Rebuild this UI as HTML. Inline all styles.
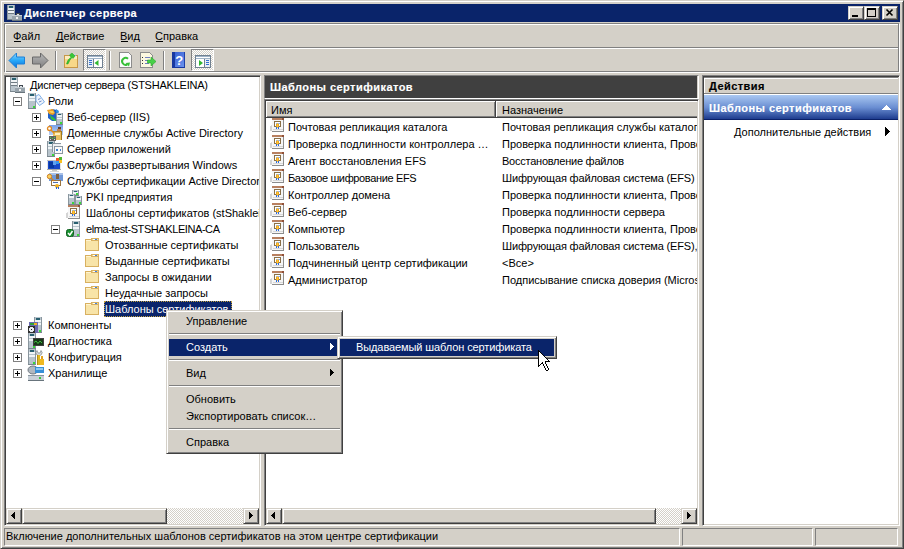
<!DOCTYPE html>
<html><head><meta charset="utf-8"><style>
*{box-sizing:border-box;margin:0;padding:0}
html,body{width:904px;height:549px;overflow:hidden;background:#d4d0c8;font-family:"Liberation Sans",sans-serif;font-size:11px;color:#000}
.a{position:absolute}
.t{position:absolute;white-space:pre;line-height:13px;height:13px}
.frame{left:0;top:0;width:904px;height:550px;border:1px solid;border-color:#d4d0c8 #404040 #404040 #d4d0c8;box-shadow:inset 1px 1px #fff,inset -1px -1px #808080}
.sunk{border:1px solid;border-color:#808080 #fff #fff #808080;box-shadow:inset 1px 1px #404040,inset -1px -1px #d4d0c8}
.btn{background:#d4d0c8;border:1px solid;border-color:#d4d0c8 #404040 #404040 #d4d0c8;box-shadow:inset 1px 1px #fff,inset -1px -1px #808080}
.dither{background:repeating-conic-gradient(#d4d0c8 0 25%,#fff 0 50%) 0 0/2px 2px}
.w{background:#fff}
.b{font-weight:bold;letter-spacing:0.45px;-webkit-text-stroke:0.15px currentColor}
.exp{position:absolute;width:9px;height:9px;border:1px solid #808080;background:#fff}
.exp:before{content:"";position:absolute;left:1px;top:3px;width:5px;height:1px;background:#000}
.exp.p:after{content:"";position:absolute;left:3px;top:1px;width:1px;height:5px;background:#000}
.thin{border:1px solid;border-color:#808080 #fff #fff #808080}
svg{position:absolute;overflow:visible}
</style></head><body>
<div class="a frame" style="left:0px;top:0px;width:904px;height:549px;"></div>
<div class="a " style="left:4px;top:4px;width:896px;height:18px;background:#0a246a"></div>
<svg style="left:7px;top:5px" width="16" height="16" viewBox="0 0 16 16"><g shape-rendering="crispEdges"><rect x="0" y="0" width="8" height="15" fill="#b8c4cc"/><rect x="0" y="0" width="1" height="15" fill="#8a969e"/><rect x="7" y="0" width="1" height="15" fill="#9aa6ae"/><rect x="0" y="14" width="8" height="1" fill="#7a868e"/><rect x="2" y="1" width="4" height="2" fill="#286070"/><rect x="1" y="3" width="6" height="2" fill="#f0f4f6"/><rect x="1" y="6" width="6" height="2" fill="#f0f4f6"/><rect x="1" y="5" width="6" height="1" fill="#707c84"/><rect x="1" y="8" width="6" height="1" fill="#707c84"/><rect x="5" y="10" width="10" height="6" fill="#98a4ac"/><rect x="5" y="10" width="10" height="1" fill="#c8d0d6"/><rect x="5" y="15" width="10" height="1" fill="#68747c"/><rect x="9" y="8" width="4" height="2" fill="#404850"/><rect x="10" y="9" width="2" height="1" fill="#e0e4e8"/><rect x="9" y="12" width="2" height="2" fill="#f0f0f0"/></g></svg>
<div class="t b" style="left:24px;top:7px;color:#fff">Диспетчер сервера</div>
<div class="a btn" style="left:848px;top:6px;width:16px;height:14px;"></div>
<div class="a btn" style="left:864px;top:6px;width:16px;height:14px;"></div>
<div class="a btn" style="left:882px;top:6px;width:16px;height:14px;"></div>
<svg style="left:848px;top:6px" width="16" height="14" viewBox="0 0 16 14"><g shape-rendering="crispEdges"><rect x="4" y="9" width="6" height="2" fill="#000"/></g></svg>
<svg style="left:864px;top:6px" width="16" height="14" viewBox="0 0 16 14"><g shape-rendering="crispEdges"><rect x="3.5" y="2.5" width="8" height="8" fill="none" stroke="#000" stroke-width="1"/><rect x="3" y="2" width="9" height="2" fill="#000"/></g></svg>
<svg style="left:882px;top:6px" width="16" height="14" viewBox="0 0 16 14"><g><path d="M4.5 3.5 L10.5 9.5 M10.5 3.5 L4.5 9.5" stroke="#000" stroke-width="1.6"/></g></svg>
<div class="a " style="left:4px;top:23px;width:895px;height:49px;border:1px solid #808080"></div>
<div class="a " style="left:5px;top:24px;width:895px;height:49px;border:1px solid #fff"></div>
<div class="a " style="left:6px;top:47px;width:892px;height:1px;background:#808080"></div>
<div class="a " style="left:5px;top:48px;width:893px;height:1px;background:#fff"></div>
<div class="a " style="left:898px;top:24px;width:1px;height:48px;background:#808080"></div>
<div class="t " style="left:13px;top:30px;">Файл</div>
<div class="t " style="left:56px;top:30px;">Действие</div>
<div class="t " style="left:120px;top:30px;">Вид</div>
<div class="t " style="left:155px;top:30px;">Справка</div>
<div class="a " style="left:14px;top:41px;width:7px;height:1px;background:#000"></div>
<div class="a " style="left:56px;top:41px;width:8px;height:1px;background:#000"></div>
<div class="a " style="left:121px;top:41px;width:7px;height:1px;background:#000"></div>
<div class="a " style="left:156px;top:41px;width:7px;height:1px;background:#000"></div>
<svg style="left:8px;top:52px" width="18" height="17" viewBox="0 0 18 17"><defs><linearGradient id="gb" x1="0" y1="0" x2="0" y2="1"><stop offset="0" stop-color="#8ad8ff"/><stop offset="0.5" stop-color="#28a8f8"/><stop offset="1" stop-color="#0a70d8"/></linearGradient></defs><path d="M1 8.5 L8.5 1 L8.5 5 L16.5 5 L16.5 12 L8.5 12 L8.5 16 Z" fill="url(#gb)" stroke="#1c80d8" stroke-width="1" stroke-linejoin="miter"/></svg>
<svg style="left:31px;top:52px" width="18" height="17" viewBox="0 0 18 17"><defs><linearGradient id="gg" x1="0" y1="0" x2="0" y2="1"><stop offset="0" stop-color="#b8b8b8"/><stop offset="1" stop-color="#808080"/></linearGradient></defs><path d="M17 8.5 L9.5 1 L9.5 5 L1.5 5 L1.5 12 L9.5 12 L9.5 16 Z" fill="url(#gg)" stroke="#686868" stroke-width="1"/></svg>
<div class="a " style="left:55px;top:51px;width:1px;height:19px;background:#808080"></div>
<div class="a " style="left:56px;top:51px;width:1px;height:19px;background:#fff"></div>
<svg style="left:64px;top:52px" width="16" height="17" viewBox="0 0 16 17"><g shape-rendering="crispEdges"><rect x="0.5" y="3.5" width="13" height="12" fill="#f8d888" stroke="#c89848"/><rect x="1" y="4" width="12" height="3" fill="#fcecc0"/><rect x="9" y="3" width="3" height="1" fill="#80b0f0"/></g><path d="M2.5 12 Q3.5 7 7 5.5 L5.5 3 L8 1 L11 4 L9 6.5 L8 5.5 Q5.5 8 4 12Z" fill="#38c838" stroke="#20a020" stroke-width="0.5"/></svg>
<div class="a " style="left:83px;top:49px;width:23px;height:22px;border:1px solid;border-color:#808080 #fff #fff #808080;background:repeating-conic-gradient(#d4d0c8 0 25%,#fff 0 50%) 0 0/2px 2px"></div>
<svg style="left:87px;top:55px" width="16" height="13" viewBox="0 0 16 13"><g shape-rendering="crispEdges"><rect x="0.5" y="0.5" width="15" height="12" fill="#fff" stroke="#708090"/><rect x="1" y="1" width="14" height="1" fill="#a0b4c8"/><rect x="1" y="3" width="14" height="1" fill="#a0b4c8"/><rect x="1" y="4" width="5" height="8" fill="#e8eef4"/><rect x="6" y="4" width="1" height="8" fill="#708090"/><rect x="2" y="5" width="3" height="1" fill="#3070d0"/><rect x="2" y="7" width="3" height="1" fill="#3070d0"/><rect x="2" y="9" width="3" height="1" fill="#3070d0"/></g><path d="M11.5 5 L7.5 8 L11.5 11Z" fill="#30b830"/></svg>
<div class="a " style="left:109px;top:51px;width:1px;height:19px;background:#808080"></div>
<div class="a " style="left:110px;top:51px;width:1px;height:19px;background:#fff"></div>
<svg style="left:119px;top:52px" width="13" height="16" viewBox="0 0 13 16"><g shape-rendering="crispEdges"><path d="M0.5 0.5 L9.5 0.5 L12.5 3.5 L12.5 15.5 L0.5 15.5 Z" fill="#fcfcfc" stroke="#8c8c8c"/></g><path d="M9 6.8 A3.5 3.5 0 1 0 8.2 12.5" stroke="#38c038" stroke-width="2" fill="none"/><path d="M6.5 11 L11 10.5 L10 14.5Z" fill="#38c038"/></svg>
<svg style="left:140px;top:52px" width="17" height="16" viewBox="0 0 17 16"><g shape-rendering="crispEdges"><path d="M0.5 0.5 L9.5 0.5 L12.5 3.5 L12.5 15.5 L0.5 15.5 Z" fill="#fcf8e0" stroke="#8c8c8c"/><rect x="2" y="5" width="1" height="1" fill="#303030"/><rect x="5" y="5" width="5" height="1" fill="#7080c0"/><rect x="2" y="8" width="1" height="1" fill="#303030"/><rect x="5" y="8" width="4" height="1" fill="#7080c0"/><rect x="2" y="11" width="1" height="1" fill="#303030"/><rect x="5" y="11" width="4" height="1" fill="#7080c0"/></g><path d="M7.5 8 L11 8 L11 5 L16 9.5 L11 14 L11 11 L7.5 11Z" fill="#48d048" stroke="#28a828" stroke-width="0.6"/></svg>
<div class="a " style="left:163px;top:51px;width:1px;height:19px;background:#808080"></div>
<div class="a " style="left:164px;top:51px;width:1px;height:19px;background:#fff"></div>
<svg style="left:172px;top:52px" width="13" height="16" viewBox="0 0 13 16"><defs><linearGradient id="hb" x1="0" y1="0" x2="1" y2="1"><stop offset="0" stop-color="#3058d0"/><stop offset="1" stop-color="#7098f0"/></linearGradient></defs><g shape-rendering="crispEdges"><rect x="0" y="0" width="13" height="16" fill="url(#hb)"/><rect x="0" y="0" width="3" height="16" fill="#1838a0"/><rect x="12" y="0" width="1" height="16" fill="#2040a8"/><rect x="0" y="15" width="13" height="1" fill="#1838a0"/></g><text x="7.3" y="13" font-family="Liberation Sans" font-weight="bold" font-size="13" fill="#fff" text-anchor="middle">?</text></svg>
<div class="a " style="left:191px;top:49px;width:23px;height:22px;border:1px solid;border-color:#808080 #fff #fff #808080;background:repeating-conic-gradient(#d4d0c8 0 25%,#fff 0 50%) 0 0/2px 2px"></div>
<svg style="left:195px;top:55px" width="16" height="13" viewBox="0 0 16 13"><g shape-rendering="crispEdges"><rect x="0.5" y="0.5" width="15" height="12" fill="#fff" stroke="#708090"/><rect x="1" y="1" width="14" height="1" fill="#a0b4c8"/><rect x="1" y="3" width="14" height="1" fill="#a0b4c8"/><rect x="10" y="4" width="5" height="8" fill="#e8eef4"/><rect x="9" y="4" width="1" height="8" fill="#708090"/><rect x="11" y="5" width="3" height="1" fill="#3070d0"/><rect x="11" y="7" width="3" height="1" fill="#3070d0"/><rect x="11" y="9" width="3" height="1" fill="#3070d0"/></g><path d="M4 5 L8 8 L4 11Z" fill="#30b830"/></svg>
<div class="a sunk w" style="left:4px;top:75px;width:257px;height:451px;"></div>
<div class="a sunk w" style="left:702px;top:75px;width:198px;height:451px;"></div>
<div class="a" style="left:6px;top:77px;width:253px;height:431px;overflow:hidden">
<svg style="left:4px;top:0px" width="16" height="16" viewBox="0 0 16 16"><g shape-rendering="crispEdges"><rect x="0" y="0" width="8" height="15" fill="#b8c4cc"/><rect x="0" y="0" width="1" height="15" fill="#8a969e"/><rect x="7" y="0" width="1" height="15" fill="#9aa6ae"/><rect x="0" y="14" width="8" height="1" fill="#7a868e"/><rect x="2" y="1" width="4" height="2" fill="#286070"/><rect x="1" y="3" width="6" height="2" fill="#f0f4f6"/><rect x="1" y="6" width="6" height="2" fill="#f0f4f6"/><rect x="1" y="5" width="6" height="1" fill="#707c84"/><rect x="1" y="8" width="6" height="1" fill="#707c84"/><rect x="5" y="10" width="10" height="6" fill="#98a4ac"/><rect x="5" y="10" width="10" height="1" fill="#c8d0d6"/><rect x="5" y="15" width="10" height="1" fill="#68747c"/><rect x="9" y="8" width="4" height="2" fill="#404850"/><rect x="10" y="9" width="2" height="1" fill="#e0e4e8"/><rect x="9" y="12" width="2" height="2" fill="#f0f0f0"/></g></svg>
<div class="t " style="left:24px;top:2px;letter-spacing:-0.23px">Диспетчер сервера (STSHAKLEINA)</div>
<div class="exp " style="left:7px;top:20px"></div>
<svg style="left:22px;top:16px" width="17" height="16" viewBox="0 0 17 16"><g shape-rendering="crispEdges"><rect x="0" y="0" width="8" height="16" fill="#b8c4cc"/><rect x="0" y="0" width="1" height="16" fill="#8a969e"/><rect x="7" y="0" width="1" height="16" fill="#8a969e"/><rect x="0" y="15" width="8" height="1" fill="#7a868e"/><rect x="2" y="1" width="4" height="2" fill="#286070"/><rect x="1" y="3" width="6" height="2" fill="#f0f4f6"/><rect x="1" y="6" width="6" height="2" fill="#f0f4f6"/><rect x="5" y="13" width="2" height="2" fill="#38d838"/></g><path d="M8 3 L11 1.5 L16.5 9 L11.5 12.5 L8 8Z" fill="#eef4fc" stroke="#80b0e8" stroke-width="1"/><path d="M10 6.5 L12.5 5.5 M11 9 L13.5 8" stroke="#5070b8" stroke-width="0.8"/></svg>
<div class="t " style="left:42px;top:18px;">Роли</div>
<div class="exp p" style="left:26px;top:36px"></div>
<svg style="left:41px;top:32px" width="16" height="16" viewBox="0 0 16 16"><path d="M1 4 L5 0 L10 1 L12 5 L9 12 L5 12 L1 9Z" fill="#2060c8"/><path d="M3 6 L7 9 L10 12 L8 12 L4 10 Z" fill="#30c040"/><path d="M0 1 L6 0 L8 4 L6 6 L2 5Z" fill="#f0a020"/><path d="M2 2 L6 2 L7 4 L4 4Z" fill="#f8d060"/><path d="M9 0 L12 2 L11 5 L9 3Z" fill="#3090e0"/><g shape-rendering="crispEdges"><rect x="9" y="4" width="7" height="12" fill="#b8c4cc"/><rect x="9" y="4" width="1" height="12" fill="#8a969e"/><rect x="15" y="4" width="1" height="12" fill="#8a969e"/><rect x="9" y="15" width="7" height="1" fill="#7a868e"/><rect x="11" y="5" width="3" height="1" fill="#286070"/><rect x="10" y="6" width="5" height="2" fill="#f0f4f6"/><rect x="10" y="9" width="5" height="1" fill="#f0f4f6"/><rect x="13" y="13" width="2" height="2" fill="#38d838"/></g></svg>
<div class="t " style="left:61px;top:34px;">Веб-сервер (IIS)</div>
<div class="exp p" style="left:26px;top:52px"></div>
<svg style="left:41px;top:48px" width="16" height="16" viewBox="0 0 16 16"><defs><linearGradient id="adg" x1="0" y1="0" x2="0" y2="1"><stop offset="0" stop-color="#7aa0e8"/><stop offset="1" stop-color="#b8d0f4"/></linearGradient></defs><g shape-rendering="crispEdges"><rect x="2" y="0" width="14" height="10" fill="url(#adg)"/><rect x="11" y="2" width="3" height="2" fill="#604028"/><rect x="10" y="4" width="4" height="4" fill="#c08050"/><rect x="6" y="6" width="9" height="9" fill="#e8c060"/><rect x="6" y="6" width="9" height="1" fill="#b08830"/><rect x="14" y="6" width="1" height="9" fill="#a07820"/><rect x="8" y="8" width="5" height="2" fill="#fff0c0"/><rect x="2" y="11" width="7" height="5" fill="#606060"/><rect x="3" y="12" width="1" height="1" fill="#40e040"/><rect x="5" y="13" width="1" height="1" fill="#40e040"/><rect x="7" y="12" width="1" height="1" fill="#40e040"/><rect x="3" y="14" width="1" height="1" fill="#e0e0e0"/><rect x="7" y="14" width="1" height="1" fill="#e0e0e0"/></g><circle cx="2.5" cy="3.5" r="2" fill="#fff" stroke="#e08820" stroke-width="1.3"/><path d="M4 5 L7.5 8.5" stroke="#e09020" stroke-width="1.5"/></svg>
<div class="t " style="left:61px;top:50px;">Доменные службы Active Directory</div>
<div class="exp p" style="left:26px;top:68px"></div>
<svg style="left:41px;top:64px" width="16" height="16" viewBox="0 0 16 16"><g shape-rendering="crispEdges"><rect x="0" y="0" width="8" height="16" fill="#b8c4cc"/><rect x="0" y="0" width="1" height="16" fill="#8a969e"/><rect x="7" y="0" width="1" height="16" fill="#8a969e"/><rect x="0" y="15" width="8" height="1" fill="#7a868e"/><rect x="2" y="1" width="4" height="2" fill="#286070"/><rect x="1" y="3" width="6" height="2" fill="#f0f4f6"/><rect x="1" y="6" width="6" height="2" fill="#f0f4f6"/><rect x="5" y="13" width="2" height="2" fill="#38d838"/><rect x="5" y="2" width="9" height="9" fill="#f0f2f4"/><rect x="5" y="2" width="9" height="1" fill="#8a96a0"/><rect x="5" y="2" width="1" height="9" fill="#8a96a0"/><rect x="7" y="5" width="9" height="8" fill="#fafafa"/><rect x="7" y="5" width="9" height="1" fill="#8a96a0"/><rect x="7" y="5" width="1" height="8" fill="#8a96a0"/><rect x="15" y="5" width="1" height="8" fill="#8a96a0"/><rect x="7" y="12" width="9" height="1" fill="#8a96a0"/><rect x="9" y="8" width="2" height="2" fill="#4080d0"/><rect x="13" y="8" width="1" height="2" fill="#4080d0"/></g></svg>
<div class="t " style="left:61px;top:66px;">Сервер приложений</div>
<div class="exp p" style="left:26px;top:84px"></div>
<svg style="left:41px;top:80px" width="16" height="16" viewBox="0 0 16 16"><g shape-rendering="crispEdges"><rect x="0" y="3" width="14" height="10" fill="#e4e4e4"/><rect x="0" y="3" width="14" height="1" fill="#c0c0c0"/><rect x="0" y="12" width="14" height="1" fill="#a8a8a8"/><rect x="1" y="4" width="12" height="8" fill="#1848c8"/><rect x="2" y="5" width="5" height="6" fill="#0838a0"/><rect x="6" y="4" width="3" height="4" fill="#60a0f0"/><rect x="5" y="13" width="5" height="1" fill="#c8c8c8"/><rect x="3" y="14" width="9" height="1" fill="#d8d8d8"/><rect x="9" y="1" width="3" height="3" fill="#f05828"/><rect x="12" y="0" width="3" height="3" fill="#50b830"/><rect x="9" y="4" width="3" height="3" fill="#3898f0"/><rect x="12" y="3" width="3" height="3" fill="#f8c020"/></g></svg>
<div class="t " style="left:61px;top:82px;">Службы развертывания Windows</div>
<div class="exp " style="left:26px;top:100px"></div>
<svg style="left:41px;top:96px" width="16" height="16" viewBox="0 0 16 16"><g shape-rendering="crispEdges"><rect x="2" y="0" width="14" height="8" fill="#7098d8"/><rect x="2" y="0" width="14" height="2" fill="#a8c0e8"/><rect x="9" y="1" width="3" height="5" fill="#806040"/><rect x="4" y="7" width="10" height="6" fill="#fff"/><rect x="4" y="7" width="10" height="1" fill="#9a7440"/><rect x="4" y="12" width="10" height="1" fill="#9a7440"/><rect x="4" y="7" width="1" height="6" fill="#9a7440"/><rect x="13" y="7" width="1" height="6" fill="#9a7440"/><rect x="6" y="9" width="5" height="1" fill="#5070b0"/></g><circle cx="2.5" cy="3.5" r="2.2" fill="#f8d060" stroke="#d08020" stroke-width="1"/><path d="M4 5 L7 8" stroke="#d08020" stroke-width="1.2"/><circle cx="10" cy="13" r="2" fill="#f0b020"/><rect x="9" y="14" width="1" height="2" fill="#2060e0"/><rect x="11" y="14" width="1" height="2" fill="#2060e0"/></svg>
<div class="t " style="left:61px;top:98px;">Службы сертификации Active Directory</div>
<svg style="left:60px;top:112px" width="16" height="16" viewBox="0 0 16 16"><g shape-rendering="crispEdges"><rect x="6" y="1" width="7" height="6" fill="#b8c4cc"/><rect x="6" y="1" width="1" height="6" fill="#8a969e"/><rect x="12" y="1" width="1" height="6" fill="#8a969e"/><rect x="6" y="6" width="7" height="1" fill="#7a868e"/><rect x="8" y="2" width="3" height="1" fill="#286070"/><rect x="7" y="3" width="5" height="2" fill="#f0f4f6"/><rect x="10" y="4" width="2" height="2" fill="#38d838"/><rect x="2" y="5" width="7" height="11" fill="#b8c4cc"/><rect x="2" y="5" width="1" height="11" fill="#8a969e"/><rect x="8" y="5" width="1" height="11" fill="#8a969e"/><rect x="2" y="15" width="7" height="1" fill="#7a868e"/><rect x="4" y="6" width="3" height="1" fill="#286070"/><rect x="3" y="7" width="5" height="2" fill="#f0f4f6"/><rect x="6" y="13" width="2" height="2" fill="#38d838"/><rect x="9" y="7" width="7" height="9" fill="#b8c4cc"/><rect x="9" y="7" width="1" height="9" fill="#8a969e"/><rect x="15" y="7" width="1" height="9" fill="#8a969e"/><rect x="9" y="15" width="7" height="1" fill="#7a868e"/><rect x="11" y="8" width="3" height="1" fill="#286070"/><rect x="10" y="9" width="5" height="2" fill="#f0f4f6"/><rect x="13" y="13" width="2" height="2" fill="#38d838"/></g></svg>
<div class="t " style="left:80px;top:114px;">PKI предприятия</div>
<svg style="left:60px;top:128px" width="16" height="16" viewBox="0 0 16 16"><g shape-rendering="crispEdges"><rect x="0" y="8" width="2" height="5" fill="#d4d4d4"/><rect x="1" y="7" width="1" height="1" fill="#e0e0e0"/><rect x="2" y="2" width="12" height="12" fill="#f6f6f6"/><rect x="13" y="2" width="1" height="12" fill="#8c8c8c"/><rect x="2" y="13" width="12" height="1" fill="#8c8c8c"/><rect x="3" y="11" width="10" height="1" fill="#d8d8d8"/><rect x="2" y="0" width="12" height="2" fill="#b88060"/><rect x="12" y="0" width="2" height="2" fill="#905038"/><rect x="4" y="3" width="7" height="6" fill="#8a7048"/><rect x="5" y="4" width="5" height="4" fill="#fff"/><rect x="6" y="5" width="4" height="1" fill="#90b0e0"/><rect x="6" y="6" width="3" height="3" fill="#f0a818"/><rect x="7" y="5" width="1" height="5" fill="#f8c040"/><rect x="6" y="9" width="1" height="2" fill="#2868e0"/><rect x="8" y="9" width="1" height="2" fill="#2868e0"/></g></svg>
<div class="t " style="left:80px;top:130px;">Шаблоны сертификатов (stShakleina.elma-test.ru)</div>
<div class="exp " style="left:45px;top:148px"></div>
<svg style="left:60px;top:144px" width="16" height="16" viewBox="0 0 16 16"><g shape-rendering="crispEdges"><rect x="6" y="0" width="8" height="16" fill="#b8c4cc"/><rect x="6" y="0" width="1" height="16" fill="#8a969e"/><rect x="13" y="0" width="1" height="16" fill="#8a969e"/><rect x="6" y="15" width="8" height="1" fill="#7a868e"/><rect x="8" y="1" width="4" height="2" fill="#286070"/><rect x="7" y="3" width="6" height="2" fill="#f0f4f6"/><rect x="7" y="6" width="6" height="2" fill="#f0f4f6"/><rect x="11" y="13" width="2" height="2" fill="#38d838"/></g><rect x="0.5" y="8.5" width="7" height="7" rx="2" fill="#189030" stroke="#106020"/><path d="M2 12 L3.8 14 L6.5 10" stroke="#fff" stroke-width="1.4" fill="none"/></svg>
<div class="t " style="left:80px;top:146px;letter-spacing:-0.42px">elma-test-STSHAKLEINA-CA</div>
<svg style="left:79px;top:160px" width="16" height="16" viewBox="0 0 16 16"><g shape-rendering="crispEdges"><rect x="0.5" y="2.5" width="13" height="11" fill="#f8e4a8" stroke="#d8b060"/><rect x="6.5" y="1.5" width="7" height="2" fill="#f4dc98" stroke="#d8b060"/><rect x="8" y="2" width="2" height="1" fill="#fff"/><rect x="10" y="2" width="2" height="1" fill="#4080e0"/><rect x="1" y="3" width="5" height="1" fill="#fff4d0"/></g></svg>
<div class="t " style="left:99px;top:162px;">Отозванные сертификаты</div>
<svg style="left:79px;top:176px" width="16" height="16" viewBox="0 0 16 16"><g shape-rendering="crispEdges"><rect x="0.5" y="2.5" width="13" height="11" fill="#f8e4a8" stroke="#d8b060"/><rect x="6.5" y="1.5" width="7" height="2" fill="#f4dc98" stroke="#d8b060"/><rect x="8" y="2" width="2" height="1" fill="#fff"/><rect x="10" y="2" width="2" height="1" fill="#4080e0"/><rect x="1" y="3" width="5" height="1" fill="#fff4d0"/></g></svg>
<div class="t " style="left:99px;top:178px;">Выданные сертификаты</div>
<svg style="left:79px;top:192px" width="16" height="16" viewBox="0 0 16 16"><g shape-rendering="crispEdges"><rect x="0.5" y="2.5" width="13" height="11" fill="#f8e4a8" stroke="#d8b060"/><rect x="6.5" y="1.5" width="7" height="2" fill="#f4dc98" stroke="#d8b060"/><rect x="8" y="2" width="2" height="1" fill="#fff"/><rect x="10" y="2" width="2" height="1" fill="#4080e0"/><rect x="1" y="3" width="5" height="1" fill="#fff4d0"/></g></svg>
<div class="t " style="left:99px;top:194px;">Запросы в ожидании</div>
<svg style="left:79px;top:208px" width="16" height="16" viewBox="0 0 16 16"><g shape-rendering="crispEdges"><rect x="0.5" y="2.5" width="13" height="11" fill="#f8e4a8" stroke="#d8b060"/><rect x="6.5" y="1.5" width="7" height="2" fill="#f4dc98" stroke="#d8b060"/><rect x="8" y="2" width="2" height="1" fill="#fff"/><rect x="10" y="2" width="2" height="1" fill="#4080e0"/><rect x="1" y="3" width="5" height="1" fill="#fff4d0"/></g></svg>
<div class="t " style="left:99px;top:210px;">Неудачные запросы</div>
<svg style="left:79px;top:224px" width="16" height="16" viewBox="0 0 16 16"><g shape-rendering="crispEdges"><rect x="0.5" y="2.5" width="13" height="11" fill="#f8e4a8" stroke="#d8b060"/><rect x="6.5" y="1.5" width="7" height="2" fill="#f4dc98" stroke="#d8b060"/><rect x="8" y="2" width="2" height="1" fill="#fff"/><rect x="10" y="2" width="2" height="1" fill="#4080e0"/><rect x="1" y="3" width="5" height="1" fill="#fff4d0"/></g></svg>
<div class="a " style="left:98px;top:224px;width:128px;height:16px;background:#0a246a;outline:1px dotted #c0a040;outline-offset:-1px"></div>
<div class="t " style="left:99px;top:226px;color:#fff">Шаблоны сертификатов</div>
<div class="exp p" style="left:7px;top:244px"></div>
<svg style="left:22px;top:240px" width="16" height="16" viewBox="0 0 16 16"><g shape-rendering="crispEdges"><rect x="6" y="0" width="8" height="16" fill="#b8c4cc"/><rect x="6" y="0" width="1" height="16" fill="#8a969e"/><rect x="13" y="0" width="1" height="16" fill="#8a969e"/><rect x="6" y="15" width="8" height="1" fill="#7a868e"/><rect x="8" y="1" width="4" height="2" fill="#286070"/><rect x="7" y="3" width="6" height="2" fill="#f0f4f6"/><rect x="7" y="6" width="6" height="2" fill="#f0f4f6"/><rect x="11" y="13" width="2" height="2" fill="#38d838"/><rect x="1" y="5" width="9" height="11" fill="#6a6ab0"/><rect x="2" y="6" width="7" height="2" fill="#30a040"/><rect x="6" y="6" width="3" height="2" fill="#f0b020"/><rect x="0" y="9" width="7" height="7" fill="#303030"/><circle cx="3.5" cy="12.5" r="2.5" fill="#e8ecf0"/><rect x="3" y="12" width="1" height="1" fill="#202020"/></g></svg>
<div class="t " style="left:42px;top:242px;">Компоненты</div>
<div class="exp p" style="left:7px;top:260px"></div>
<svg style="left:22px;top:256px" width="16" height="16" viewBox="0 0 16 16"><g shape-rendering="crispEdges"><rect x="0" y="0" width="8" height="16" fill="#b8c4cc"/><rect x="0" y="0" width="1" height="16" fill="#8a969e"/><rect x="7" y="0" width="1" height="16" fill="#8a969e"/><rect x="0" y="15" width="8" height="1" fill="#7a868e"/><rect x="2" y="1" width="4" height="2" fill="#286070"/><rect x="1" y="3" width="6" height="2" fill="#f0f4f6"/><rect x="1" y="6" width="6" height="2" fill="#f0f4f6"/><rect x="5" y="13" width="2" height="2" fill="#38d838"/><rect x="5" y="5" width="11" height="8" fill="#404040"/><rect x="6" y="6" width="9" height="6" fill="#183818"/><path d="M6 9.5 L8 8 L10 10.5 L12 8 L14 10" stroke="#40c040" fill="none" shape-rendering="auto"/></g></svg>
<div class="t " style="left:42px;top:258px;">Диагностика</div>
<div class="exp p" style="left:7px;top:276px"></div>
<svg style="left:22px;top:272px" width="16" height="16" viewBox="0 0 16 16"><g shape-rendering="crispEdges"><rect x="0" y="0" width="8" height="16" fill="#b8c4cc"/><rect x="0" y="0" width="1" height="16" fill="#8a969e"/><rect x="7" y="0" width="1" height="16" fill="#8a969e"/><rect x="0" y="15" width="8" height="1" fill="#7a868e"/><rect x="2" y="1" width="4" height="2" fill="#286070"/><rect x="1" y="3" width="6" height="2" fill="#f0f4f6"/><rect x="1" y="6" width="6" height="2" fill="#f0f4f6"/><rect x="5" y="13" width="2" height="2" fill="#38d838"/></g><path d="M9 1.5 A3 3 0 1 0 13 1.5 L12 4 L10 4Z" fill="#d8dcdf" stroke="#8a9096" stroke-width="0.8"/><g shape-rendering="crispEdges"><rect x="9" y="6" width="3" height="10" fill="#e0b820"/><rect x="9" y="6" width="1" height="10" fill="#b89010"/><rect x="13" y="7" width="2" height="3" fill="#e0a020"/><rect x="12" y="10" width="4" height="6" fill="#f0b820"/></g></svg>
<div class="t " style="left:42px;top:274px;">Конфигурация</div>
<div class="exp p" style="left:7px;top:292px"></div>
<svg style="left:22px;top:288px" width="16" height="16" viewBox="0 0 16 16"><g shape-rendering="crispEdges"><ellipse cx="5" cy="5" rx="5" ry="4" fill="#b0b8c0" stroke="#707880" shape-rendering="auto"/><rect x="7" y="2" width="9" height="6" fill="#3890d8"/><rect x="8" y="3" width="7" height="2" fill="#90c8f0"/><rect x="0" y="10" width="16" height="6" fill="#c8d0d8"/><rect x="0" y="10" width="16" height="1" fill="#8a96a0"/><rect x="0" y="15" width="16" height="1" fill="#68747c"/><rect x="11" y="12" width="2" height="2" fill="#38c838"/></g></svg>
<div class="t " style="left:42px;top:290px;">Хранилище</div>
</div>
<div class="a btn" style="left:6px;top:508px;width:16px;height:16px;"></div>
<svg style="left:11px;top:512px" width="4" height="7" viewBox="0 0 4 7"><g fill="#000" shape-rendering="crispEdges"><rect x="3" y="0" width="1" height="7"/><rect x="2" y="1" width="1" height="5"/><rect x="1" y="2" width="1" height="3"/><rect x="0" y="3" width="1" height="1"/></g></svg>
<div class="a btn" style="left:22px;top:508px;width:145px;height:16px;"></div>
<div class="a dither" style="left:167px;top:508px;width:76px;height:16px;"></div>
<div class="a btn" style="left:243px;top:508px;width:16px;height:16px;"></div>
<svg style="left:249px;top:512px" width="4" height="7" viewBox="0 0 4 7"><g fill="#000" shape-rendering="crispEdges"><rect x="0" y="0" width="1" height="7"/><rect x="1" y="1" width="1" height="5"/><rect x="2" y="2" width="1" height="3"/><rect x="3" y="3" width="1" height="1"/></g></svg>
<div class="a " style="left:264px;top:75px;width:435px;height:24px;border:1px solid;border-color:#808080 #fff #fff #808080;background:#404040;box-shadow:inset -1px 0 #d4d0c8"></div>
<div class="t b" style="left:270px;top:81px;color:#fff">Шаблоны сертификатов</div>
<div class="a sunk w" style="left:264px;top:99px;width:435px;height:427px;"></div>
<div class="a " style="left:266px;top:101px;width:230px;height:17px;background:#d4d0c8;border-right:1px solid #404040;border-bottom:1px solid #404040;box-shadow:inset 1px 1px #fff,inset -1px -1px #808080"></div>
<div class="a " style="left:496px;top:101px;width:201px;height:17px;background:#d4d0c8;border-bottom:1px solid #404040;box-shadow:inset 1px 1px #fff,inset 0 -1px #808080"></div>
<div class="t " style="left:271px;top:104px;">Имя</div>
<div class="t " style="left:502px;top:104px;">Назначение</div>
<div class="a" style="left:266px;top:118px;width:431px;height:390px;overflow:hidden">
<svg style="left:4px;top:0px" width="16" height="16" viewBox="0 0 16 16"><g shape-rendering="crispEdges"><rect x="0" y="8" width="2" height="5" fill="#d4d4d4"/><rect x="1" y="7" width="1" height="1" fill="#e0e0e0"/><rect x="2" y="2" width="12" height="12" fill="#f6f6f6"/><rect x="13" y="2" width="1" height="12" fill="#8c8c8c"/><rect x="2" y="13" width="12" height="1" fill="#8c8c8c"/><rect x="3" y="11" width="10" height="1" fill="#d8d8d8"/><rect x="2" y="0" width="12" height="2" fill="#b88060"/><rect x="12" y="0" width="2" height="2" fill="#905038"/><rect x="4" y="3" width="7" height="6" fill="#8a7048"/><rect x="5" y="4" width="5" height="4" fill="#fff"/><rect x="6" y="5" width="4" height="1" fill="#90b0e0"/><rect x="6" y="6" width="3" height="3" fill="#f0a818"/><rect x="7" y="5" width="1" height="5" fill="#f8c040"/><rect x="6" y="9" width="1" height="2" fill="#2868e0"/><rect x="8" y="9" width="1" height="2" fill="#2868e0"/></g></svg>
<div class="t " style="left:22px;top:3px;">Почтовая репликация каталога</div>
<div class="t " style="left:236px;top:3px;">Почтовая репликация службы каталогов</div>
<svg style="left:4px;top:17px" width="16" height="16" viewBox="0 0 16 16"><g shape-rendering="crispEdges"><rect x="0" y="8" width="2" height="5" fill="#d4d4d4"/><rect x="1" y="7" width="1" height="1" fill="#e0e0e0"/><rect x="2" y="2" width="12" height="12" fill="#f6f6f6"/><rect x="13" y="2" width="1" height="12" fill="#8c8c8c"/><rect x="2" y="13" width="12" height="1" fill="#8c8c8c"/><rect x="3" y="11" width="10" height="1" fill="#d8d8d8"/><rect x="2" y="0" width="12" height="2" fill="#b88060"/><rect x="12" y="0" width="2" height="2" fill="#905038"/><rect x="4" y="3" width="7" height="6" fill="#8a7048"/><rect x="5" y="4" width="5" height="4" fill="#fff"/><rect x="6" y="5" width="4" height="1" fill="#90b0e0"/><rect x="6" y="6" width="3" height="3" fill="#f0a818"/><rect x="7" y="5" width="1" height="5" fill="#f8c040"/><rect x="6" y="9" width="1" height="2" fill="#2868e0"/><rect x="8" y="9" width="1" height="2" fill="#2868e0"/></g></svg>
<div class="t " style="left:22px;top:20px;">Проверка подлинности контроллера …</div>
<div class="t " style="left:236px;top:20px;">Проверка подлинности клиента, Проверка</div>
<svg style="left:4px;top:34px" width="16" height="16" viewBox="0 0 16 16"><g shape-rendering="crispEdges"><rect x="0" y="8" width="2" height="5" fill="#d4d4d4"/><rect x="1" y="7" width="1" height="1" fill="#e0e0e0"/><rect x="2" y="2" width="12" height="12" fill="#f6f6f6"/><rect x="13" y="2" width="1" height="12" fill="#8c8c8c"/><rect x="2" y="13" width="12" height="1" fill="#8c8c8c"/><rect x="3" y="11" width="10" height="1" fill="#d8d8d8"/><rect x="2" y="0" width="12" height="2" fill="#b88060"/><rect x="12" y="0" width="2" height="2" fill="#905038"/><rect x="4" y="3" width="7" height="6" fill="#8a7048"/><rect x="5" y="4" width="5" height="4" fill="#fff"/><rect x="6" y="5" width="4" height="1" fill="#90b0e0"/><rect x="6" y="6" width="3" height="3" fill="#f0a818"/><rect x="7" y="5" width="1" height="5" fill="#f8c040"/><rect x="6" y="9" width="1" height="2" fill="#2868e0"/><rect x="8" y="9" width="1" height="2" fill="#2868e0"/></g></svg>
<div class="t " style="left:22px;top:37px;">Агент восстановления EFS</div>
<div class="t " style="left:236px;top:37px;letter-spacing:-0.24px">Восстановление файлов</div>
<svg style="left:4px;top:51px" width="16" height="16" viewBox="0 0 16 16"><g shape-rendering="crispEdges"><rect x="0" y="8" width="2" height="5" fill="#d4d4d4"/><rect x="1" y="7" width="1" height="1" fill="#e0e0e0"/><rect x="2" y="2" width="12" height="12" fill="#f6f6f6"/><rect x="13" y="2" width="1" height="12" fill="#8c8c8c"/><rect x="2" y="13" width="12" height="1" fill="#8c8c8c"/><rect x="3" y="11" width="10" height="1" fill="#d8d8d8"/><rect x="2" y="0" width="12" height="2" fill="#b88060"/><rect x="12" y="0" width="2" height="2" fill="#905038"/><rect x="4" y="3" width="7" height="6" fill="#8a7048"/><rect x="5" y="4" width="5" height="4" fill="#fff"/><rect x="6" y="5" width="4" height="1" fill="#90b0e0"/><rect x="6" y="6" width="3" height="3" fill="#f0a818"/><rect x="7" y="5" width="1" height="5" fill="#f8c040"/><rect x="6" y="9" width="1" height="2" fill="#2868e0"/><rect x="8" y="9" width="1" height="2" fill="#2868e0"/></g></svg>
<div class="t " style="left:22px;top:54px;letter-spacing:-0.36px">Базовое шифрование EFS</div>
<div class="t " style="left:236px;top:54px;letter-spacing:-0.16px">Шифрующая файловая система (EFS)</div>
<svg style="left:4px;top:68px" width="16" height="16" viewBox="0 0 16 16"><g shape-rendering="crispEdges"><rect x="0" y="8" width="2" height="5" fill="#d4d4d4"/><rect x="1" y="7" width="1" height="1" fill="#e0e0e0"/><rect x="2" y="2" width="12" height="12" fill="#f6f6f6"/><rect x="13" y="2" width="1" height="12" fill="#8c8c8c"/><rect x="2" y="13" width="12" height="1" fill="#8c8c8c"/><rect x="3" y="11" width="10" height="1" fill="#d8d8d8"/><rect x="2" y="0" width="12" height="2" fill="#b88060"/><rect x="12" y="0" width="2" height="2" fill="#905038"/><rect x="4" y="3" width="7" height="6" fill="#8a7048"/><rect x="5" y="4" width="5" height="4" fill="#fff"/><rect x="6" y="5" width="4" height="1" fill="#90b0e0"/><rect x="6" y="6" width="3" height="3" fill="#f0a818"/><rect x="7" y="5" width="1" height="5" fill="#f8c040"/><rect x="6" y="9" width="1" height="2" fill="#2868e0"/><rect x="8" y="9" width="1" height="2" fill="#2868e0"/></g></svg>
<div class="t " style="left:22px;top:71px;">Контроллер домена</div>
<div class="t " style="left:236px;top:71px;">Проверка подлинности клиента, Проверка</div>
<svg style="left:4px;top:85px" width="16" height="16" viewBox="0 0 16 16"><g shape-rendering="crispEdges"><rect x="0" y="8" width="2" height="5" fill="#d4d4d4"/><rect x="1" y="7" width="1" height="1" fill="#e0e0e0"/><rect x="2" y="2" width="12" height="12" fill="#f6f6f6"/><rect x="13" y="2" width="1" height="12" fill="#8c8c8c"/><rect x="2" y="13" width="12" height="1" fill="#8c8c8c"/><rect x="3" y="11" width="10" height="1" fill="#d8d8d8"/><rect x="2" y="0" width="12" height="2" fill="#b88060"/><rect x="12" y="0" width="2" height="2" fill="#905038"/><rect x="4" y="3" width="7" height="6" fill="#8a7048"/><rect x="5" y="4" width="5" height="4" fill="#fff"/><rect x="6" y="5" width="4" height="1" fill="#90b0e0"/><rect x="6" y="6" width="3" height="3" fill="#f0a818"/><rect x="7" y="5" width="1" height="5" fill="#f8c040"/><rect x="6" y="9" width="1" height="2" fill="#2868e0"/><rect x="8" y="9" width="1" height="2" fill="#2868e0"/></g></svg>
<div class="t " style="left:22px;top:88px;">Веб-сервер</div>
<div class="t " style="left:236px;top:88px;">Проверка подлинности сервера</div>
<svg style="left:4px;top:102px" width="16" height="16" viewBox="0 0 16 16"><g shape-rendering="crispEdges"><rect x="0" y="8" width="2" height="5" fill="#d4d4d4"/><rect x="1" y="7" width="1" height="1" fill="#e0e0e0"/><rect x="2" y="2" width="12" height="12" fill="#f6f6f6"/><rect x="13" y="2" width="1" height="12" fill="#8c8c8c"/><rect x="2" y="13" width="12" height="1" fill="#8c8c8c"/><rect x="3" y="11" width="10" height="1" fill="#d8d8d8"/><rect x="2" y="0" width="12" height="2" fill="#b88060"/><rect x="12" y="0" width="2" height="2" fill="#905038"/><rect x="4" y="3" width="7" height="6" fill="#8a7048"/><rect x="5" y="4" width="5" height="4" fill="#fff"/><rect x="6" y="5" width="4" height="1" fill="#90b0e0"/><rect x="6" y="6" width="3" height="3" fill="#f0a818"/><rect x="7" y="5" width="1" height="5" fill="#f8c040"/><rect x="6" y="9" width="1" height="2" fill="#2868e0"/><rect x="8" y="9" width="1" height="2" fill="#2868e0"/></g></svg>
<div class="t " style="left:22px;top:105px;">Компьютер</div>
<div class="t " style="left:236px;top:105px;">Проверка подлинности клиента, Проверка</div>
<svg style="left:4px;top:119px" width="16" height="16" viewBox="0 0 16 16"><g shape-rendering="crispEdges"><rect x="0" y="8" width="2" height="5" fill="#d4d4d4"/><rect x="1" y="7" width="1" height="1" fill="#e0e0e0"/><rect x="2" y="2" width="12" height="12" fill="#f6f6f6"/><rect x="13" y="2" width="1" height="12" fill="#8c8c8c"/><rect x="2" y="13" width="12" height="1" fill="#8c8c8c"/><rect x="3" y="11" width="10" height="1" fill="#d8d8d8"/><rect x="2" y="0" width="12" height="2" fill="#b88060"/><rect x="12" y="0" width="2" height="2" fill="#905038"/><rect x="4" y="3" width="7" height="6" fill="#8a7048"/><rect x="5" y="4" width="5" height="4" fill="#fff"/><rect x="6" y="5" width="4" height="1" fill="#90b0e0"/><rect x="6" y="6" width="3" height="3" fill="#f0a818"/><rect x="7" y="5" width="1" height="5" fill="#f8c040"/><rect x="6" y="9" width="1" height="2" fill="#2868e0"/><rect x="8" y="9" width="1" height="2" fill="#2868e0"/></g></svg>
<div class="t " style="left:22px;top:122px;">Пользователь</div>
<div class="t " style="left:236px;top:122px;letter-spacing:-0.16px">Шифрующая файловая система (EFS), Защищ</div>
<svg style="left:4px;top:136px" width="16" height="16" viewBox="0 0 16 16"><g shape-rendering="crispEdges"><rect x="0" y="8" width="2" height="5" fill="#d4d4d4"/><rect x="1" y="7" width="1" height="1" fill="#e0e0e0"/><rect x="2" y="2" width="12" height="12" fill="#f6f6f6"/><rect x="13" y="2" width="1" height="12" fill="#8c8c8c"/><rect x="2" y="13" width="12" height="1" fill="#8c8c8c"/><rect x="3" y="11" width="10" height="1" fill="#d8d8d8"/><rect x="2" y="0" width="12" height="2" fill="#b88060"/><rect x="12" y="0" width="2" height="2" fill="#905038"/><rect x="4" y="3" width="7" height="6" fill="#8a7048"/><rect x="5" y="4" width="5" height="4" fill="#fff"/><rect x="6" y="5" width="4" height="1" fill="#90b0e0"/><rect x="6" y="6" width="3" height="3" fill="#f0a818"/><rect x="7" y="5" width="1" height="5" fill="#f8c040"/><rect x="6" y="9" width="1" height="2" fill="#2868e0"/><rect x="8" y="9" width="1" height="2" fill="#2868e0"/></g></svg>
<div class="t " style="left:22px;top:139px;">Подчиненный центр сертификации</div>
<div class="t " style="left:236px;top:139px;">&lt;Все&gt;</div>
<svg style="left:4px;top:153px" width="16" height="16" viewBox="0 0 16 16"><g shape-rendering="crispEdges"><rect x="0" y="8" width="2" height="5" fill="#d4d4d4"/><rect x="1" y="7" width="1" height="1" fill="#e0e0e0"/><rect x="2" y="2" width="12" height="12" fill="#f6f6f6"/><rect x="13" y="2" width="1" height="12" fill="#8c8c8c"/><rect x="2" y="13" width="12" height="1" fill="#8c8c8c"/><rect x="3" y="11" width="10" height="1" fill="#d8d8d8"/><rect x="2" y="0" width="12" height="2" fill="#b88060"/><rect x="12" y="0" width="2" height="2" fill="#905038"/><rect x="4" y="3" width="7" height="6" fill="#8a7048"/><rect x="5" y="4" width="5" height="4" fill="#fff"/><rect x="6" y="5" width="4" height="1" fill="#90b0e0"/><rect x="6" y="6" width="3" height="3" fill="#f0a818"/><rect x="7" y="5" width="1" height="5" fill="#f8c040"/><rect x="6" y="9" width="1" height="2" fill="#2868e0"/><rect x="8" y="9" width="1" height="2" fill="#2868e0"/></g></svg>
<div class="t " style="left:22px;top:156px;">Администратор</div>
<div class="t " style="left:236px;top:156px;">Подписывание списка доверия (Microsoft)</div>
</div>
<div class="a btn" style="left:266px;top:508px;width:16px;height:16px;"></div>
<svg style="left:271px;top:512px" width="4" height="7" viewBox="0 0 4 7"><g fill="#000" shape-rendering="crispEdges"><rect x="3" y="0" width="1" height="7"/><rect x="2" y="1" width="1" height="5"/><rect x="1" y="2" width="1" height="3"/><rect x="0" y="3" width="1" height="1"/></g></svg>
<div class="a btn" style="left:282px;top:508px;width:374px;height:16px;"></div>
<div class="a dither" style="left:656px;top:508px;width:25px;height:16px;"></div>
<div class="a btn" style="left:681px;top:508px;width:16px;height:16px;"></div>
<svg style="left:687px;top:512px" width="4" height="7" viewBox="0 0 4 7"><g fill="#000" shape-rendering="crispEdges"><rect x="0" y="0" width="1" height="7"/><rect x="1" y="1" width="1" height="5"/><rect x="2" y="2" width="1" height="3"/><rect x="3" y="3" width="1" height="1"/></g></svg>
<div class="a " style="left:704px;top:77px;width:194px;height:1px;background:#808080"></div>
<div class="a " style="left:704px;top:78px;width:194px;height:15px;background:#d4d0c8;border-top:1px solid #fff;border-left:1px solid #fff"></div>
<div class="a " style="left:704px;top:93px;width:194px;height:1px;background:#808080"></div>
<div class="a " style="left:704px;top:94px;width:194px;height:1px;background:#fff"></div>
<div class="t b" style="left:709px;top:80px;">Действия</div>
<div class="a " style="left:704px;top:95px;width:194px;height:25px;background:linear-gradient(#aac8f2,#6a8ed2 50%,#1e3c8e 96%,#0a2068 96%)"></div>
<div class="t b" style="left:709px;top:102px;color:#fff">Шаблоны сертификатов</div>
<svg style="left:882px;top:105px" width="9" height="5" viewBox="0 0 9 5"><g fill="#fff" shape-rendering="crispEdges"><rect x="4" y="0" width="1" height="1"/><rect x="3" y="1" width="3" height="1"/><rect x="2" y="2" width="5" height="1"/><rect x="1" y="3" width="7" height="1"/><rect x="0" y="4" width="9" height="1"/></g></svg>
<div class="t " style="left:734px;top:126px;">Дополнительные действия</div>
<svg style="left:885px;top:127px" width="5" height="9" viewBox="0 0 5 9"><g fill="#000" shape-rendering="crispEdges"><rect x="0" y="0" width="1" height="9"/><rect x="1" y="1" width="1" height="7"/><rect x="2" y="2" width="1" height="5"/><rect x="3" y="3" width="1" height="3"/><rect x="4" y="4" width="1" height="1"/></g></svg>
<div class="a thin" style="left:4px;top:528px;width:676px;height:18px;"></div>
<div class="a thin" style="left:682px;top:528px;width:131px;height:18px;"></div>
<div class="a thin" style="left:815px;top:528px;width:83px;height:18px;"></div>
<div class="t " style="left:6px;top:530px;">Включение дополнительных шаблонов сертификатов на этом центре сертификации</div>
<div class="a " style="left:166px;top:310px;width:177px;height:144px;background:#d4d0c8;border:1px solid;border-color:#d4d0c8 #404040 #404040 #d4d0c8;box-shadow:inset 1px 1px #fff,inset -1px -1px #808080"></div>
<div class="t " style="left:186px;top:315px;">Управление</div>
<div class="a " style="left:169px;top:333px;width:171px;height:1px;background:#808080"></div>
<div class="a " style="left:169px;top:334px;width:171px;height:1px;background:#fff"></div>
<div class="a " style="left:169px;top:339px;width:171px;height:17px;background:#0a246a"></div>
<div class="t " style="left:186px;top:341px;color:#fff">Создать</div>
<svg style="left:330px;top:343px" width="4" height="7" viewBox="0 0 4 7"><g fill="#fff" shape-rendering="crispEdges"><rect x="0" y="0" width="1" height="7"/><rect x="1" y="1" width="1" height="5"/><rect x="2" y="2" width="1" height="3"/><rect x="3" y="3" width="1" height="1"/></g></svg>
<div class="a " style="left:169px;top:359px;width:171px;height:1px;background:#808080"></div>
<div class="a " style="left:169px;top:360px;width:171px;height:1px;background:#fff"></div>
<div class="t " style="left:186px;top:367px;">Вид</div>
<svg style="left:330px;top:369px" width="4" height="7" viewBox="0 0 4 7"><g fill="#000" shape-rendering="crispEdges"><rect x="0" y="0" width="1" height="7"/><rect x="1" y="1" width="1" height="5"/><rect x="2" y="2" width="1" height="3"/><rect x="3" y="3" width="1" height="1"/></g></svg>
<div class="a " style="left:169px;top:385px;width:171px;height:1px;background:#808080"></div>
<div class="a " style="left:169px;top:386px;width:171px;height:1px;background:#fff"></div>
<div class="t " style="left:186px;top:393px;">Обновить</div>
<div class="t " style="left:186px;top:410px;">Экспортировать список…</div>
<div class="a " style="left:169px;top:428px;width:171px;height:1px;background:#808080"></div>
<div class="a " style="left:169px;top:429px;width:171px;height:1px;background:#fff"></div>
<div class="t " style="left:186px;top:436px;">Справка</div>
<div class="a " style="left:337px;top:336px;width:220px;height:23px;background:#d4d0c8;border:1px solid;border-color:#d4d0c8 #404040 #404040 #d4d0c8;box-shadow:inset 1px 1px #fff,inset -1px -1px #808080"></div>
<div class="a " style="left:340px;top:339px;width:214px;height:17px;background:#0a246a"></div>
<div class="t " style="left:356px;top:341px;color:#fff;letter-spacing:-0.1px">Выдаваемый шаблон сертификата</div>
<svg style="left:538px;top:350px" width="12" height="21" viewBox="0 0 12 21"><g shape-rendering="crispEdges"><rect x="0" y="0" width="1" height="1" fill="#000"/><rect x="0" y="1" width="1" height="1" fill="#000"/><rect x="1" y="1" width="1" height="1" fill="#000"/><rect x="0" y="2" width="1" height="1" fill="#000"/><rect x="1" y="2" width="1" height="1" fill="#fff"/><rect x="2" y="2" width="1" height="1" fill="#000"/><rect x="0" y="3" width="1" height="1" fill="#000"/><rect x="1" y="3" width="1" height="1" fill="#fff"/><rect x="2" y="3" width="1" height="1" fill="#fff"/><rect x="3" y="3" width="1" height="1" fill="#000"/><rect x="0" y="4" width="1" height="1" fill="#000"/><rect x="1" y="4" width="1" height="1" fill="#fff"/><rect x="2" y="4" width="1" height="1" fill="#fff"/><rect x="3" y="4" width="1" height="1" fill="#fff"/><rect x="4" y="4" width="1" height="1" fill="#000"/><rect x="0" y="5" width="1" height="1" fill="#000"/><rect x="1" y="5" width="1" height="1" fill="#fff"/><rect x="2" y="5" width="1" height="1" fill="#fff"/><rect x="3" y="5" width="1" height="1" fill="#fff"/><rect x="4" y="5" width="1" height="1" fill="#fff"/><rect x="5" y="5" width="1" height="1" fill="#000"/><rect x="0" y="6" width="1" height="1" fill="#000"/><rect x="1" y="6" width="1" height="1" fill="#fff"/><rect x="2" y="6" width="1" height="1" fill="#fff"/><rect x="3" y="6" width="1" height="1" fill="#fff"/><rect x="4" y="6" width="1" height="1" fill="#fff"/><rect x="5" y="6" width="1" height="1" fill="#fff"/><rect x="6" y="6" width="1" height="1" fill="#000"/><rect x="0" y="7" width="1" height="1" fill="#000"/><rect x="1" y="7" width="1" height="1" fill="#fff"/><rect x="2" y="7" width="1" height="1" fill="#fff"/><rect x="3" y="7" width="1" height="1" fill="#fff"/><rect x="4" y="7" width="1" height="1" fill="#fff"/><rect x="5" y="7" width="1" height="1" fill="#fff"/><rect x="6" y="7" width="1" height="1" fill="#fff"/><rect x="7" y="7" width="1" height="1" fill="#000"/><rect x="0" y="8" width="1" height="1" fill="#000"/><rect x="1" y="8" width="1" height="1" fill="#fff"/><rect x="2" y="8" width="1" height="1" fill="#fff"/><rect x="3" y="8" width="1" height="1" fill="#fff"/><rect x="4" y="8" width="1" height="1" fill="#fff"/><rect x="5" y="8" width="1" height="1" fill="#fff"/><rect x="6" y="8" width="1" height="1" fill="#fff"/><rect x="7" y="8" width="1" height="1" fill="#fff"/><rect x="8" y="8" width="1" height="1" fill="#000"/><rect x="0" y="9" width="1" height="1" fill="#000"/><rect x="1" y="9" width="1" height="1" fill="#fff"/><rect x="2" y="9" width="1" height="1" fill="#fff"/><rect x="3" y="9" width="1" height="1" fill="#fff"/><rect x="4" y="9" width="1" height="1" fill="#fff"/><rect x="5" y="9" width="1" height="1" fill="#fff"/><rect x="6" y="9" width="1" height="1" fill="#fff"/><rect x="7" y="9" width="1" height="1" fill="#fff"/><rect x="8" y="9" width="1" height="1" fill="#fff"/><rect x="9" y="9" width="1" height="1" fill="#000"/><rect x="0" y="10" width="1" height="1" fill="#000"/><rect x="1" y="10" width="1" height="1" fill="#fff"/><rect x="2" y="10" width="1" height="1" fill="#fff"/><rect x="3" y="10" width="1" height="1" fill="#fff"/><rect x="4" y="10" width="1" height="1" fill="#fff"/><rect x="5" y="10" width="1" height="1" fill="#fff"/><rect x="6" y="10" width="1" height="1" fill="#fff"/><rect x="7" y="10" width="1" height="1" fill="#fff"/><rect x="8" y="10" width="1" height="1" fill="#fff"/><rect x="9" y="10" width="1" height="1" fill="#fff"/><rect x="10" y="10" width="1" height="1" fill="#000"/><rect x="0" y="11" width="1" height="1" fill="#000"/><rect x="1" y="11" width="1" height="1" fill="#fff"/><rect x="2" y="11" width="1" height="1" fill="#fff"/><rect x="3" y="11" width="1" height="1" fill="#fff"/><rect x="4" y="11" width="1" height="1" fill="#fff"/><rect x="5" y="11" width="1" height="1" fill="#fff"/><rect x="6" y="11" width="1" height="1" fill="#fff"/><rect x="7" y="11" width="1" height="1" fill="#000"/><rect x="8" y="11" width="1" height="1" fill="#000"/><rect x="9" y="11" width="1" height="1" fill="#000"/><rect x="10" y="11" width="1" height="1" fill="#000"/><rect x="11" y="11" width="1" height="1" fill="#000"/><rect x="0" y="12" width="1" height="1" fill="#000"/><rect x="1" y="12" width="1" height="1" fill="#fff"/><rect x="2" y="12" width="1" height="1" fill="#fff"/><rect x="3" y="12" width="1" height="1" fill="#fff"/><rect x="4" y="12" width="1" height="1" fill="#000"/><rect x="5" y="12" width="1" height="1" fill="#fff"/><rect x="6" y="12" width="1" height="1" fill="#fff"/><rect x="7" y="12" width="1" height="1" fill="#000"/><rect x="0" y="13" width="1" height="1" fill="#000"/><rect x="1" y="13" width="1" height="1" fill="#fff"/><rect x="2" y="13" width="1" height="1" fill="#fff"/><rect x="3" y="13" width="1" height="1" fill="#000"/><rect x="4" y="13" width="1" height="1" fill="#000"/><rect x="5" y="13" width="1" height="1" fill="#fff"/><rect x="6" y="13" width="1" height="1" fill="#fff"/><rect x="7" y="13" width="1" height="1" fill="#000"/><rect x="0" y="14" width="1" height="1" fill="#000"/><rect x="1" y="14" width="1" height="1" fill="#fff"/><rect x="2" y="14" width="1" height="1" fill="#000"/><rect x="5" y="14" width="1" height="1" fill="#000"/><rect x="6" y="14" width="1" height="1" fill="#fff"/><rect x="7" y="14" width="1" height="1" fill="#fff"/><rect x="8" y="14" width="1" height="1" fill="#000"/><rect x="0" y="15" width="1" height="1" fill="#000"/><rect x="1" y="15" width="1" height="1" fill="#000"/><rect x="5" y="15" width="1" height="1" fill="#000"/><rect x="6" y="15" width="1" height="1" fill="#fff"/><rect x="7" y="15" width="1" height="1" fill="#fff"/><rect x="8" y="15" width="1" height="1" fill="#000"/><rect x="0" y="16" width="1" height="1" fill="#000"/><rect x="6" y="16" width="1" height="1" fill="#000"/><rect x="7" y="16" width="1" height="1" fill="#fff"/><rect x="8" y="16" width="1" height="1" fill="#fff"/><rect x="9" y="16" width="1" height="1" fill="#000"/><rect x="6" y="17" width="1" height="1" fill="#000"/><rect x="7" y="17" width="1" height="1" fill="#fff"/><rect x="8" y="17" width="1" height="1" fill="#fff"/><rect x="9" y="17" width="1" height="1" fill="#000"/><rect x="7" y="18" width="1" height="1" fill="#000"/><rect x="8" y="18" width="1" height="1" fill="#fff"/><rect x="9" y="18" width="1" height="1" fill="#fff"/><rect x="10" y="18" width="1" height="1" fill="#000"/><rect x="7" y="19" width="1" height="1" fill="#000"/><rect x="8" y="19" width="1" height="1" fill="#fff"/><rect x="9" y="19" width="1" height="1" fill="#fff"/><rect x="10" y="19" width="1" height="1" fill="#000"/><rect x="8" y="20" width="1" height="1" fill="#000"/><rect x="9" y="20" width="1" height="1" fill="#000"/></g></svg>
</body></html>
